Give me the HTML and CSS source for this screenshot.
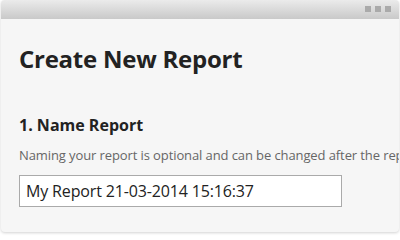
FILE: index.html
```html
<!DOCTYPE html>
<html>
<head>
<meta charset="utf-8">
<link rel="stylesheet" href="styles.css">
</head>
<body>
<div class="window">
  <div class="titlebar">
    <span class="dot"></span><span class="dot"></span><span class="dot"></span>
  </div>
  <div class="content">
    <h1 class="title">Create New Report</h1>
    <h2 class="step">1. Name Report</h2>
    <p class="hint">Naming your report is optional and can be changed after the report has been created.</p>
    <input class="name-input" type="text" value="My Report 21-03-2014 15:16:37">
  </div>
</div>
</body>
</html>
```
FILE: styles.css
```css
html, body {
  margin: 0;
  padding: 0;
  background: #ffffff;
  width: 400px;
  height: 240px;
  overflow: hidden;
}
.window {
  margin: 0 1px;
  width: 398px;
  height: 232px;
  background: #f6f6f6;
  border-radius: 4px;
  box-shadow: 0 1px 3px rgba(0,0,0,0.18);
  overflow: hidden;
  font-family: "Open Sans", sans-serif;
}
.titlebar {
  height: 19px;
  background: linear-gradient(#ebebeb, #c9c9c9);
  display: flex;
  justify-content: flex-end;
  align-items: flex-start;
  gap: 4px;
  padding: 6px 8px 0 0;
  box-sizing: border-box;
}
.dot {
  width: 6px;
  height: 6px;
  background: #aaaaaa;
}
.content {
  padding: 0 0 0 18px;
  white-space: nowrap;
}
.title {
  margin: 23px 0 0;
  font-size: 24px;
  line-height: 34px;
  font-weight: 700;
  letter-spacing: -0.25px;
  color: #222222;
}
.step {
  margin: 38px 0 0;
  font-size: 16px;
  line-height: 22px;
  font-weight: 700;
  color: #222222;
}
.hint {
  margin: 10px 0 0;
  font-size: 13px;
  line-height: 18px;
  letter-spacing: -0.1px;
  color: #666666;
}
.name-input {
  display: block;
  margin: 11px 0 0;
  width: 323px;
  height: 32px;
  box-sizing: border-box;
  border: 1px solid #aaaaaa;
  background: #ffffff;
  padding: 0 6px;
  font-family: "Open Sans", sans-serif;
  font-size: 16px;
  letter-spacing: -0.15px;
  color: #222222;
  outline: none;
}
```
